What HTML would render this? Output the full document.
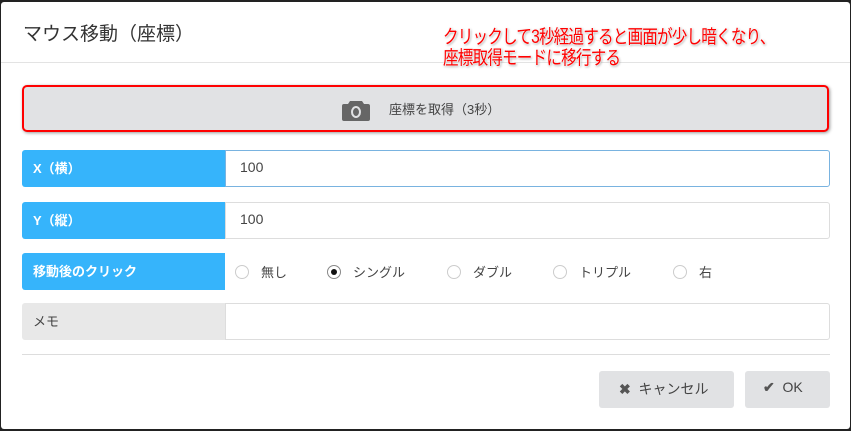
<!DOCTYPE html>
<html><head><meta charset="utf-8"><style>
*{box-sizing:border-box;margin:0;padding:0}
body{width:851px;height:431px;background:#222;font-family:"Liberation Sans","Noto Sans CJK JP",sans-serif;position:relative;overflow:hidden}
.dlg{position:absolute;left:1px;top:2px;width:849px;height:427px;background:#fff;border-radius:3px}
.t{position:absolute;left:22px;top:17px;font-size:19px;color:#333}
.hr{position:absolute;left:0;right:0;top:60px;height:1px;background:#e3e3e3}
.ann{position:absolute;left:442px;top:25px;font-size:19px;line-height:21px;color:#f00;letter-spacing:-1px;text-shadow:0 0 2px #fff,0 0 2px #fff,1px 1px 3px #888;transform:scaleX(.82);transform-origin:left}
.cap{position:absolute;left:21px;top:83px;width:807px;height:47px;border:2px solid #f00;border-radius:5px;background:#e1e2e4;box-shadow:1px 1px 3px #999;font-size:13px;color:#444}
.cap span{position:absolute;left:365px;top:12px}
.row{position:absolute;left:21px;width:808px;height:37px}
.lab{position:absolute;left:0;top:0;width:203px;height:100%;background:#36b4fb;color:#fff;font-weight:bold;font-size:13px;padding:8px 11px;border-radius:3px 0 0 3px}
.in{position:absolute;left:203px;right:0;top:0;height:100%;border:1px solid #ddd;border-radius:0 3px 3px 0;font-size:14px;color:#444;padding:8px 14px}
.r{position:absolute;top:9px;font-size:13px;color:#444}
.r i{display:inline-block;width:14px;height:14px;border:1px solid #ccc;border-radius:50%;vertical-align:-2px;margin-right:12px;position:relative}
.btn{position:absolute;top:369px;height:37px;background:#e1e2e4;border-radius:3px;font-size:14px;color:#444;padding:8px 0}
</style></head><body>
<div class="dlg">
<div class="t">マウス移動（座標）</div>
<div class="hr"></div>
<div class="cap"><svg style="position:absolute;left:318px;top:11px" width="28" height="23" viewBox="0 0 28 23"><path d="M8 3h12l2 3h4a2 2 0 0 1 2 2v13a2 2 0 0 1-2 2H2a2 2 0 0 1-2-2V8a2 2 0 0 1 2-2h4z" fill="#666"/><ellipse cx="14" cy="14" rx="4" ry="5" fill="none" stroke="#e1e2e4" stroke-width="2"/></svg><span>座標を取得（3秒）</span></div>
<div class="ann">クリックして3秒経過すると画面が少し暗くなり、<br>座標取得モードに移行する</div>
<div class="row" style="top:148px"><div class="lab">X（横）</div><div class="in" style="border-color:#79b3e0">100</div></div>
<div class="row" style="top:200px"><div class="lab">Y（縦）</div><div class="in">100</div></div>
<div class="row" style="top:251px"><div class="lab">移動後のクリック</div>
<div class="r" style="left:213px"><i></i>無し</div>
<div class="r" style="left:305px"><i style="border-color:#888"><b style="position:absolute;left:3px;top:3px;width:6px;height:6px;border-radius:50%;background:#111"></b></i>シングル</div>
<div class="r" style="left:425px"><i></i>ダブル</div>
<div class="r" style="left:531px"><i></i>トリプル</div>
<div class="r" style="left:651px"><i></i>右</div>
</div>
<div class="row" style="top:301px"><div class="lab" style="background:#e8e8e8;color:#444;font-weight:normal">メモ</div><div class="in"></div></div>
<div style="position:absolute;left:21px;width:808px;top:352px;height:1px;background:#ddd"></div>
<div class="btn" style="left:598px;width:135px;padding-left:20px"><b style="color:#555">✖</b>&nbsp;&nbsp;キャンセル</div>
<div class="btn" style="left:744px;width:85px;padding-left:18px"><b style="color:#555">✔</b>&nbsp;&nbsp;OK</div>
</div>
</body></html>
